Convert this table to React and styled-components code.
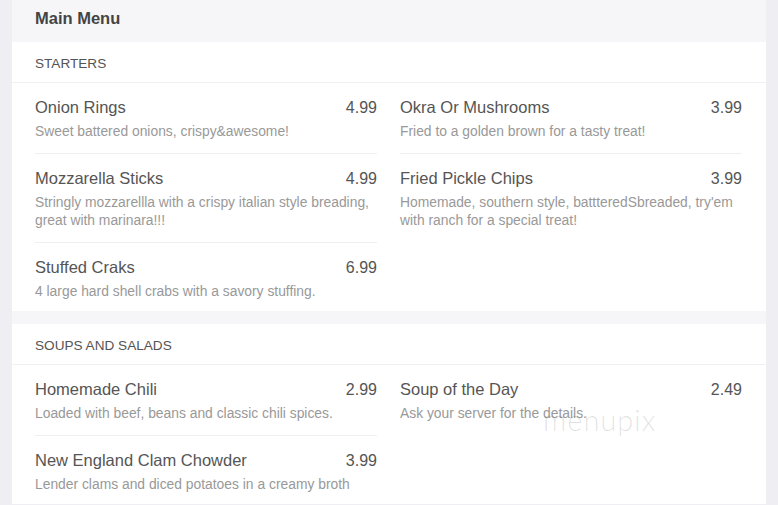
import React from 'react';
import styled, { createGlobalStyle } from 'styled-components';

const GlobalStyle = createGlobalStyle`
    body {
        margin: 0;
        background-color: #eeeef3;
        font-family: 'Liberation Sans', Arial, sans-serif;
    }
`;

const menu = [
    {
        title: 'Starters',
        columns: [
            [
                { name: 'Onion Rings', price: '4.99', desc: 'Sweet battered onions, crispy&awesome!' },
                {
                    name: 'Mozzarella Sticks',
                    price: '4.99',
                    desc: 'Stringly mozzarellla with a crispy italian style breading, great with marinara!!!',
                },
                { name: 'Stuffed Craks', price: '6.99', desc: '4 large hard shell crabs with a savory stuffing.' },
            ],
            [
                { name: 'Okra Or Mushrooms', price: '3.99', desc: 'Fried to a golden brown for a tasty treat!' },
                {
                    name: 'Fried Pickle Chips',
                    price: '3.99',
                    desc: "Homemade, southern style, battteredSbreaded, try'em with ranch for a special treat!",
                },
            ],
        ],
    },
    {
        title: 'Soups and Salads',
        columns: [
            [
                { name: 'Homemade Chili', price: '2.99', desc: 'Loaded with beef, beans and classic chili spices.' },
                {
                    name: 'New England Clam Chowder',
                    price: '3.99',
                    desc: 'Lender clams and diced potatoes in a creamy broth',
                },
            ],
            [{ name: 'Soup of the Day', price: '2.49', desc: 'Ask your server for the details.' }],
        ],
    },
];

const App = () => {
    return (
        <Page>
            <GlobalStyle />
            <Card>
                <Header>Main Menu</Header>
                {menu.map((section) => (
                    <Section key={section.title}>
                        <SectionTitle>{section.title}</SectionTitle>
                        <Columns>
                            {section.columns.map((col, i) => (
                                <Column key={i}>
                                    {col.map((item) => (
                                        <Item key={item.name}>
                                            <ItemTop>
                                                <ItemName>{item.name}</ItemName>
                                                <ItemPrice>{item.price}</ItemPrice>
                                            </ItemTop>
                                            <ItemDesc>{item.desc}</ItemDesc>
                                        </Item>
                                    ))}
                                </Column>
                            ))}
                        </Columns>
                    </Section>
                ))}
            </Card>
            <Watermark>menupix</Watermark>
        </Page>
    );
};

export default App;

const Page = styled.div`
    position: relative;
    padding: 0 12px;
    height: 505px;
    overflow: hidden;
`;

const Card = styled.div`
    display: flex;
    flex-direction: column;
    background-color: #f6f6f8;
`;

const Header = styled.div`
    height: 42px;
    line-height: 36px;
    padding: 0 23px;
    background-color: #f6f6f8;
    color: #444;
    font-size: 16.5px;
    font-weight: 700;
`;

const Section = styled.div`
    background-color: white;

    & + & {
        margin-top: 13px;
    }
`;

const SectionTitle = styled.div`
    padding: 14px 23px 10px;
    line-height: 16px;
    font-size: 13.6px;
    color: #555;
    text-transform: uppercase;
    border-bottom: 1px solid #f0f0f2;
`;

const Columns = styled.div`
    display: grid;
    grid-template-columns: 1fr 1fr;
    gap: 23px;
    padding: 0 24px 0 23px;
`;

const Column = styled.div`
    display: flex;
    flex-direction: column;
`;

const Item = styled.div`
    padding: 14px 0 13px;
    border-bottom: 1px solid #efeff1;

    &:last-child {
        padding-bottom: 11px;
        border-bottom: none;
    }
`;

const ItemTop = styled.div`
    display: flex;
    justify-content: space-between;
    align-items: baseline;
    font-size: 16.5px;
    line-height: 20px;
    color: #555;
`;

const ItemName = styled.div``;

const ItemPrice = styled.div`
    font-size: 16px;
`;

const ItemDesc = styled.div`
    margin-top: 4px;
    font-size: 13.85px;
    line-height: 18px;
    color: #999;
`;

const Watermark = styled.div`
    position: absolute;
    left: 543px;
    top: 402px;
    font-family: Lato, 'Noto Sans', sans-serif;
    font-weight: 300;
    font-size: 29px;
    letter-spacing: 1px;
    color: rgba(0, 0, 0, 0.12);
    pointer-events: none;
`;
